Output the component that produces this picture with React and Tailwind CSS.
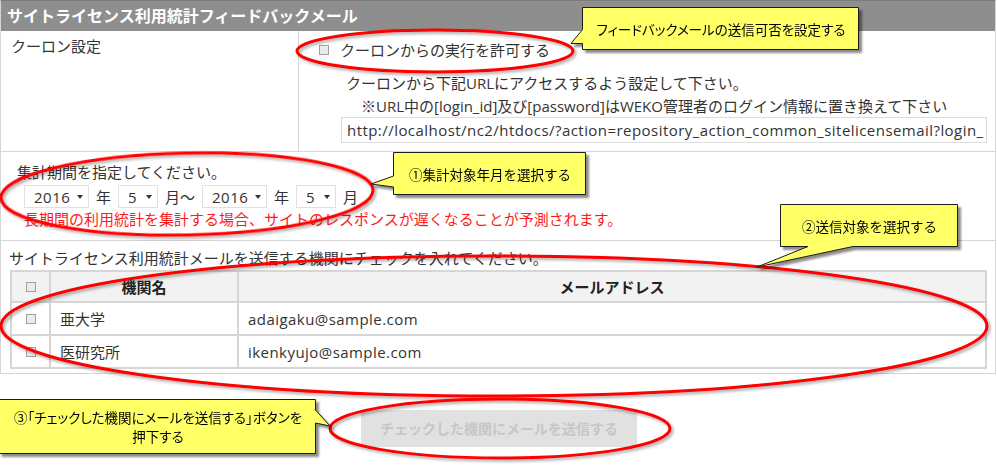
import React from "react";

function Check() {
  return <span className="inline-block w-[10px] h-[10px] border border-[#a0a0a0] bg-[#ebebeb] shrink-0" />;
}

function Sel({ value, w }) {
  return (
    <div className={`h-[23px] ${w} border border-[#e0e0e0] bg-white flex items-center justify-between pl-[9px] pr-[5px]`}>
      <span className="tracking-[0.5px]">{value}</span>
      <svg width="6" height="4" viewBox="0 0 6 4"><path d="M0 0H6L3 4Z" fill="#333" /></svg>
    </div>
  );
}

export default function App() {
  return (
    <div className="relative w-[997px] h-[470px] bg-white overflow-hidden text-[15px] leading-[22px] text-[#333] font-['Open_Sans','Noto_Sans_CJK_JP',sans-serif]">
      <div className="w-[996px] border border-[#d6d6d6] border-t-[#7a7a7a]">
        <div className="h-[30px] bg-[#8e8e8e] text-white font-bold text-[16px] pl-[6px] flex items-center leading-none">
          サイトライセンス利用統計フィードバックメール
        </div>
        <div className="flex h-[121px] border-b border-[#d6d6d6]">
          <div className="w-[298px] border-r border-[#d6d6d6] pl-[10px] pt-[4px]">クーロン設定</div>
          <div className="flex-1 pt-[8px]">
            <div className="flex items-center gap-[11px] pl-[20px]">
              <Check />
              <span>クーロンからの実行を許可する</span>
            </div>
            <div className="pl-[47px] mt-[11px]">クーロンから下記URLにアクセスするよう設定して下さい。</div>
            <div className="pl-[62px] mt-[1px]">※URL中の[login_id]及び[password]はWEKO管理者のログイン情報に置き換えて下さい</div>
            <div className="ml-[42px] w-[646px] h-[26px] border border-[#dcdcdc] flex items-center pl-[5px] overflow-hidden whitespace-nowrap tracking-[0.45px]">
              http://localhost/nc2/htdocs/?action=repository_action_common_sitelicensemail?login_
            </div>
          </div>
        </div>
        <div className="h-[89px] border-b border-[#d6d6d6] pl-[16px] pt-[9px]">
          <div>集計期間を指定してください。</div>
          <div className="flex items-center gap-[7px] ml-[7px] mt-[2px]">
            <Sel value="2016" w="w-[65px]" />
            <span>年</span>
            <Sel value="5" w="w-[40px]" />
            <span>月～</span>
            <Sel value="2016" w="w-[65px]" />
            <span>年</span>
            <Sel value="5" w="w-[40px]" />
            <span>月</span>
          </div>
          <div className="text-[#ff1a1a] ml-[7px]">長期間の利用統計を集計する場合、サイトのレスポンスが遅くなることが予測されます。</div>
        </div>
        <div className="h-[132px] pt-[6px]">
          <div className="pl-[8px]">サイトライセンス利用統計メールを送信する機関にチェックを入れてください。</div>
          <div className="ml-[9px] mt-[1px] w-[977px] border-2 border-[#d6d6d6]">
            <div className="flex h-[31px] bg-[#f2f2f2] border-b-2 border-[#d6d6d6] font-bold text-[#222]">
              <div className="w-[39px] border-r-2 border-[#d6d6d6] flex items-center justify-center"><Check /></div>
              <div className="w-[188px] border-r-2 border-[#d6d6d6] flex items-center justify-center">機関名</div>
              <div className="flex-1 flex items-center justify-center">メールアドレス</div>
            </div>
            <div className="flex h-[33px] border-b-2 border-[#d6d6d6]">
              <div className="w-[39px] border-r-2 border-[#d6d6d6] flex items-center justify-center"><Check /></div>
              <div className="w-[188px] border-r-2 border-[#d6d6d6] flex items-center pl-[9px]">亜大学</div>
              <div className="flex-1 flex items-center pl-[9px] tracking-[0.45px]">adaigaku@sample.com</div>
            </div>
            <div className="flex h-[31px]">
              <div className="w-[39px] border-r-2 border-[#d6d6d6] flex items-center justify-center"><Check /></div>
              <div className="w-[188px] border-r-2 border-[#d6d6d6] flex items-center pl-[9px]">医研究所</div>
              <div className="flex-1 flex items-center pl-[9px] tracking-[0.45px]">ikenkyujo@sample.com</div>
            </div>
          </div>
        </div>
      </div>
      <div className="flex justify-center mt-[36px] pl-[1px]">
        <div className="w-[276px] h-[37px] rounded-[2px] bg-[#e1e1e1] flex items-center justify-center font-bold text-[14px] text-[#c6c6c6]">
          チェックした機関にメールを送信する
        </div>
      </div>

      <svg className="absolute inset-0 pointer-events-none" width="997" height="470" viewBox="0 0 997 470">
        <defs>
          <filter id="es" x="-10%" y="-30%" width="120%" height="160%">
            <feDropShadow dx="2" dy="2" stdDeviation="1.5" floodColor="#000" floodOpacity="0.35" />
          </filter>
          <filter id="cs" x="-10%" y="-30%" width="120%" height="160%">
            <feDropShadow dx="3" dy="3" stdDeviation="1.2" floodColor="#000" floodOpacity="0.45" />
          </filter>
        </defs>
        <g fill="none" stroke="#ff0000" strokeWidth="3" filter="url(#es)">
          <ellipse cx="435" cy="51" rx="138" ry="21" />
          <ellipse cx="187" cy="194" rx="186" ry="41" transform="rotate(-1.2 187 194)" />
          <ellipse cx="494" cy="326" rx="493" ry="70" />
          <ellipse cx="500" cy="428.5" rx="170" ry="29.5" />
        </g>
        <g fill="#ffff66" stroke="#1a1a1a" strokeWidth="1" filter="url(#cs)">
          <path d="M582.5 7.5H858.5V49.5H582.5V43.5L571 43.5L582.5 29.5Z" />
          <path d="M393.5 152.5H585.5V194.5H393.5V187L371 184L393.5 176Z" />
          <path d="M780.5 204.5H957.5V246.5H853L757 267L808 246.5H780.5Z" />
          <path d="M-1 399.5H315.5V410L330 426L315.5 423V453.5H-1Z" />
        </g>
      </svg>
      <div className="absolute left-[583px] top-[8px] w-[276px] h-[42px] flex items-center justify-center text-[13.5px] text-black [font-feature-settings:'palt'] font-['Noto_Sans_CJK_JP',sans-serif]">
        フィードバックメールの送信可否を設定する
      </div>
      <div className="absolute left-[394px] top-[153px] w-[192px] h-[42px] flex items-center justify-center text-[13.5px] text-black font-['Noto_Sans_CJK_JP',sans-serif]">
        ①集計対象年月を選択する
      </div>
      <div className="absolute left-[781px] top-[205px] w-[177px] h-[42px] flex items-center justify-center text-[13.5px] text-black font-['Noto_Sans_CJK_JP',sans-serif]">
        ②送信対象を選択する
      </div>
      <div className="absolute left-[0px] top-[400px] w-[316px] h-[54px] flex flex-col items-center justify-center text-[13.5px] leading-[19px] text-black [font-feature-settings:'palt'] font-['Noto_Sans_CJK_JP',sans-serif]">
        <span>③「チェックした機関にメールを送信する」ボタンを</span>
        <span>押下する</span>
      </div>
    </div>
  );
}
